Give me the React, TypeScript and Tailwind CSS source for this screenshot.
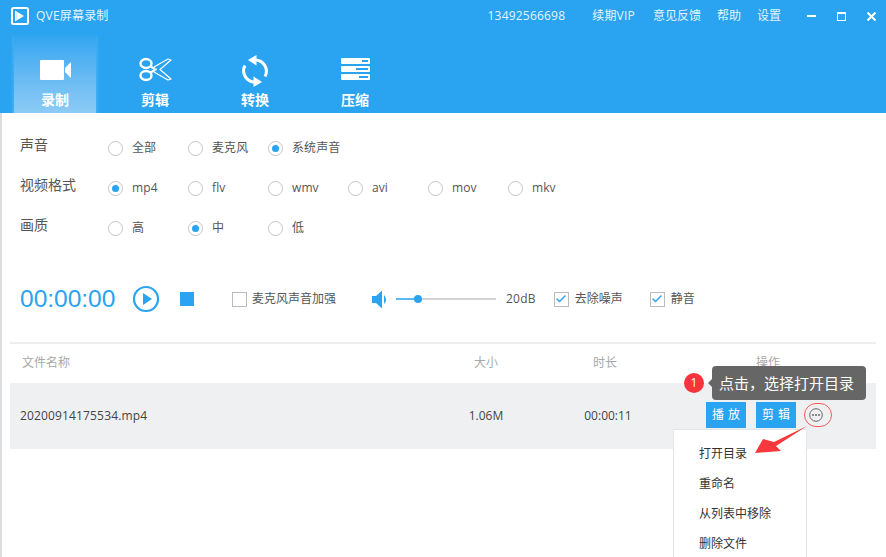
import { Check } from "lucide-react";

const font = "font-['Open_Sans','Noto_Sans_CJK_SC',sans-serif]";

function VideoIcon() {
  return (
    <svg width="31" height="20" viewBox="0 0 31 20" fill="#fff">
      <rect x="0" y="0" width="24" height="20" rx="1" />
      <path d="M25 8 L31 2 V18 L25 12 Z" />
    </svg>
  );
}

function ScissorsIcon() {
  return (
    <svg width="33" height="25" viewBox="0 0 33 25" fill="none" stroke="#fff">
      <ellipse cx="7" cy="6.5" rx="5.5" ry="4.5" strokeWidth="2.4" />
      <ellipse cx="7" cy="18.5" rx="5.5" ry="4.5" strokeWidth="2.4" />
      <path d="M11.5 9.5 L16 12" strokeWidth="2.4" />
      <path d="M11.5 15.5 L16 13" strokeWidth="2.4" />
      <path d="M15 10 L29 2 L32 3 L21 12.5 L32 22 L29 23 L15 15" strokeWidth="1.2" strokeLinejoin="round" />
      <circle cx="17" cy="12.5" r="1" fill="#fff" stroke="none" />
    </svg>
  );
}

function ConvertIcon() {
  return (
    <svg width="26" height="32" viewBox="0 0 26 32" fill="#fff">
      <path d="M13 5 A11.2 11.2 0 0 1 23 21.5" fill="none" stroke="#fff" strokeWidth="3" />
      <path d="M13 27 A11.2 11.2 0 0 1 3 10.5" fill="none" stroke="#fff" strokeWidth="3" />
      <path d="M14.5 0 L14.5 10.5 L6 5 Z" />
      <path d="M11.5 21.5 L11.5 32 L20 27 Z" />
    </svg>
  );
}

function CompressIcon() {
  return (
    <svg width="29" height="22" viewBox="0 0 29 22" fill="#fff">
      <path d="M1 0 H28 a1 1 0 0 1 1 1 V5 a1 1 0 0 1 -1 1 H1 a1 1 0 0 1 -1 -1 V1 a1 1 0 0 1 1 -1 Z M21 2 V4 H27 V2 Z" fillRule="evenodd" />
      <path d="M1 8 H28 a1 1 0 0 1 1 1 V13 a1 1 0 0 1 -1 1 H1 a1 1 0 0 1 -1 -1 V9 a1 1 0 0 1 1 -1 Z M15 10 V12 H27 V10 Z" fillRule="evenodd" />
      <path d="M1 16 H28 a1 1 0 0 1 1 1 V21 a1 1 0 0 1 -1 1 H1 a1 1 0 0 1 -1 -1 V17 a1 1 0 0 1 1 -1 Z M18 18 V20 H27 V18 Z" fillRule="evenodd" />
    </svg>
  );
}

function Tab({ icon, name, active }: { icon: React.ReactNode; name: string; active?: boolean }) {
  return (
    <div
      className={`flex h-[80px] w-[82px] flex-col items-center ${
        active ? "bg-gradient-to-b from-[#2aa4f0] to-[#8ccbf5] shadow-[0_4px_4px_rgba(255,255,255,0.25)]" : ""
      }`}
    >
      <div className="flex h-[50px] w-full items-end justify-center">{icon}</div>
      <div className="mt-[7px] text-[14px] leading-[20px] font-bold text-white">{name}</div>
    </div>
  );
}

function Radio({ label, checked }: { label: string; checked?: boolean }) {
  return (
    <div className="flex w-[80px] items-center">
      <span className="flex h-[15px] w-[15px] items-center justify-center rounded-full border border-[#c4c4c4] bg-white">
        {checked && <span className="h-[7px] w-[7px] rounded-full bg-[#2aa4f0]" />}
      </span>
      <span className="ml-[9px] text-[12px] leading-[16px] tracking-[0.1px] text-[#555]">{label}</span>
    </div>
  );
}

function OptionRow({ title, options, selected }: { title: string; options: string[]; selected: string }) {
  return (
    <div className="flex h-[40px] items-start">
      <div className="w-[88px] pl-[20px] text-[14px] leading-[16px] text-[#555]">{title}</div>
      <div className="flex pt-[3px] pl-[20px]">
        {options.map((o) => (
          <Radio key={o} label={o} checked={o === selected} />
        ))}
      </div>
    </div>
  );
}

function Box({ checked }: { checked?: boolean }) {
  return (
    <span className="flex h-[15px] w-[15px] items-center justify-center border border-[#bbb] bg-white">
      {checked && <Check size={12} strokeWidth={3} className="text-[#2aa4f0]" />}
    </span>
  );
}

export default function App() {
  return (
    <div className={`${font} relative h-[557px] w-[886px] overflow-hidden bg-white`}>
      <header className="h-[113px] bg-[#2aa4f0] text-white">
        <div className="flex h-[33px] items-center pr-[10px] pl-[11px]">
          <svg width="18" height="18" viewBox="0 0 18 18" fill="none" className="mb-[2px]">
            <rect x="1" y="1" width="16" height="16" rx="1.5" stroke="#fff" strokeWidth="2" />
            <path d="M5.5 4.5 L13 9 L5.5 13.5 Z" fill="#fff" />
            <rect x="4" y="4" width="1.5" height="10" fill="#fff" />
          </svg>
          <span className="mb-[2px] ml-[7px] text-[12px] tracking-[0.2px] text-[#e4f3fd]">QVE屏幕录制</span>
          <div className="ml-auto flex items-center text-[12px] text-[#e4f3fd]">
            <span className="mb-[1px] tracking-[0.2px]">13492566698</span>
            <span className="mb-[1px] ml-[27px] tracking-[0.2px]">续期VIP</span>
            <span className="mb-[1px] ml-[18px]">意见反馈</span>
            <span className="mb-[1px] ml-[16px]">帮助</span>
            <span className="mb-[1px] ml-[16px]">设置</span>
            <svg width="9" height="9" viewBox="0 0 9 9" className="ml-[26px]">
              <rect x="0" y="3" width="9" height="2" fill="#fff" />
            </svg>
            <svg width="9" height="9" viewBox="0 0 9 9" className="ml-[21px]" fill="none">
              <rect x="0.5" y="0.5" width="8" height="8" stroke="#fff" />
              <rect x="0" y="0" width="9" height="2" fill="#fff" />
            </svg>
            <svg width="9" height="9" viewBox="0 0 9 9" className="ml-[21px]">
              <path d="M0.5 0.5 L8.5 8.5 M8.5 0.5 L0.5 8.5" stroke="#fff" strokeWidth="2" />
            </svg>
          </div>
        </div>
        <div className="flex pl-[14px]">
          <Tab active icon={<div className="pb-[3px]"><VideoIcon /></div>} name="录制" />
          <div className="w-[18px]" />
          <Tab icon={<div className="pb-[1px]"><ScissorsIcon /></div>} name="剪辑" />
          <div className="w-[18px]" />
          <Tab icon={<div className="-mb-[4px]"><ConvertIcon /></div>} name="转换" />
          <div className="w-[18px]" />
          <Tab icon={<div className="pb-[3px]"><CompressIcon /></div>} name="压缩" />
        </div>
      </header>

      <main className="h-[444px] border-l-[2px] border-[#dcdcdc]">
        <div className="-ml-[2px] pt-[24px]">
          <OptionRow title="声音" options={["全部", "麦克风", "系统声音"]} selected="系统声音" />
          <OptionRow title="视频格式" options={["mp4", "flv", "wmv", "avi", "mov", "mkv"]} selected="mp4" />
          <OptionRow title="画质" options={["高", "中", "低"]} selected="中" />
        </div>

        <div className="-ml-[2px] mt-[22px] flex h-[40px] items-center pl-[20px]">
          <span className="w-[96px] font-['Liberation_Sans',sans-serif] text-[24.5px] text-[#2aa4f0]">00:00:00</span>
          <svg width="28" height="28" viewBox="0 0 28 28" className="ml-[16px]">
            <circle cx="14" cy="14" r="12" fill="none" stroke="#2aa4f0" strokeWidth="2.2" />
            <path d="M11 8 L20 14 L11 20 Z" fill="#2aa4f0" />
          </svg>
          <span className="ml-[20px] h-[14px] w-[14px] bg-[#2aa4f0]" />
          <span className="ml-[38px]"><Box /></span>
          <span className="ml-[5px] text-[12px] text-[#555]">麦克风声音加强</span>
          <svg width="17" height="19" viewBox="0 0 17 19" className="ml-[36px]" fill="#2aa4f0">
            <path d="M0 6 H4 L10 0.5 V18.5 L4 13 H0 Z" />
            <path d="M12 5 Q16 9.5 12 14 Z" />
          </svg>
          <div className="relative ml-[7px] h-[2px] w-[100px] bg-[#d4d4d4]">
            <div className="h-full w-[22px] bg-[#5cb9f3]" />
            <span className="absolute top-[-3px] left-[18px] h-[8px] w-[8px] rounded-full bg-[#2aa4f0]" />
          </div>
          <span className="ml-[10px] text-[12px] tracking-[0.2px] text-[#555]">20dB</span>
          <span className="ml-[18px]"><Box checked /></span>
          <span className="ml-[6px] text-[12px] text-[#555]">去除噪声</span>
          <span className="ml-[27px]"><Box checked /></span>
          <span className="ml-[6px] text-[12px] text-[#555]">静音</span>
        </div>

        <div className="mt-[23px] mr-[10px] ml-[8px] border-t-[2px] border-[#eeeeee]">
          <div className="flex h-[39px] items-center pb-[2px] text-[12px] text-[#a8a8a8]">
            <span className="w-[444px] pl-[12px]">文件名称</span>
            <span className="-ml-[8px] w-[80px] text-center">大小</span>
            <span className="ml-[54px] w-[50px] text-center">时长</span>
            <span className="ml-[126px]">操作</span>
          </div>
          <div className="flex h-[66px] items-center bg-[#eff0f2] text-[12px] text-[#444]">
            <span className="w-[444px] pl-[10px] tracking-[0.15px]">20200914175534.mp4</span>
            <span className="-ml-[8px] w-[80px] text-center">1.06M</span>
            <span className="ml-[57px] w-[50px] text-center">00:00:11</span>
            <div className="ml-[73px] -mt-[3px] flex items-center">
              <span className="flex h-[26px] w-[40px] items-center justify-center bg-[#2aa4f0] pl-[4px] tracking-[4px] text-white">播放</span>
              <span className="ml-[10px] flex h-[26px] w-[40px] items-center justify-center bg-[#2aa4f0] pl-[4px] tracking-[4px] text-white">剪辑</span>
              <span className="ml-[8px] flex h-[24px] w-[28px] items-center justify-center rounded-full border border-[#f35b5b] pr-[4px]">
                <svg width="14" height="14" viewBox="0 0 14 14" fill="#666">
                  <circle cx="7" cy="7" r="6.3" fill="none" stroke="#666" />
                  <circle cx="4" cy="7" r="1" />
                  <circle cx="7" cy="7" r="1" />
                  <circle cx="10" cy="7" r="1" />
                </svg>
              </span>
            </div>
          </div>
        </div>
      </main>

      {/* step tooltip */}
      <div className="absolute top-[366px] left-[684px] flex items-center">
        <span className="flex h-[20px] w-[20px] items-center justify-center rounded-full bg-[#f8333c] text-[12px] text-white">1</span>
        <span className="ml-[4px] h-0 w-0 border-y-[4px] border-r-[4px] border-y-transparent border-r-[#666]" />
        <span className="flex h-[34px] w-[154px] items-center rounded-[4px] bg-[#666] pl-[7px] text-[15px] text-white">点击，选择打开目录</span>
      </div>

      {/* more menu */}
      <div className="absolute top-[429px] left-[673px] h-[140px] w-[134px] border border-[#e6e6e6] bg-white pt-[9px] pl-[25px] text-[12px] text-[#333]">
        <div className="flex h-[30px] items-center">打开目录</div>
        <div className="flex h-[30px] items-center">重命名</div>
        <div className="flex h-[30px] items-center">从列表中移除</div>
        <div className="flex h-[30px] items-center">删除文件</div>
      </div>

      {/* arrow annotation */}
      <svg width="70" height="50" viewBox="0 0 70 50" className="absolute top-[423px] left-[750px]" fill="#f8383c">
        <path d="M57 3 L24 19 L13 16 L5 30 L31 28 L26 23 Z" />
      </svg>
    </div>
  );
}
